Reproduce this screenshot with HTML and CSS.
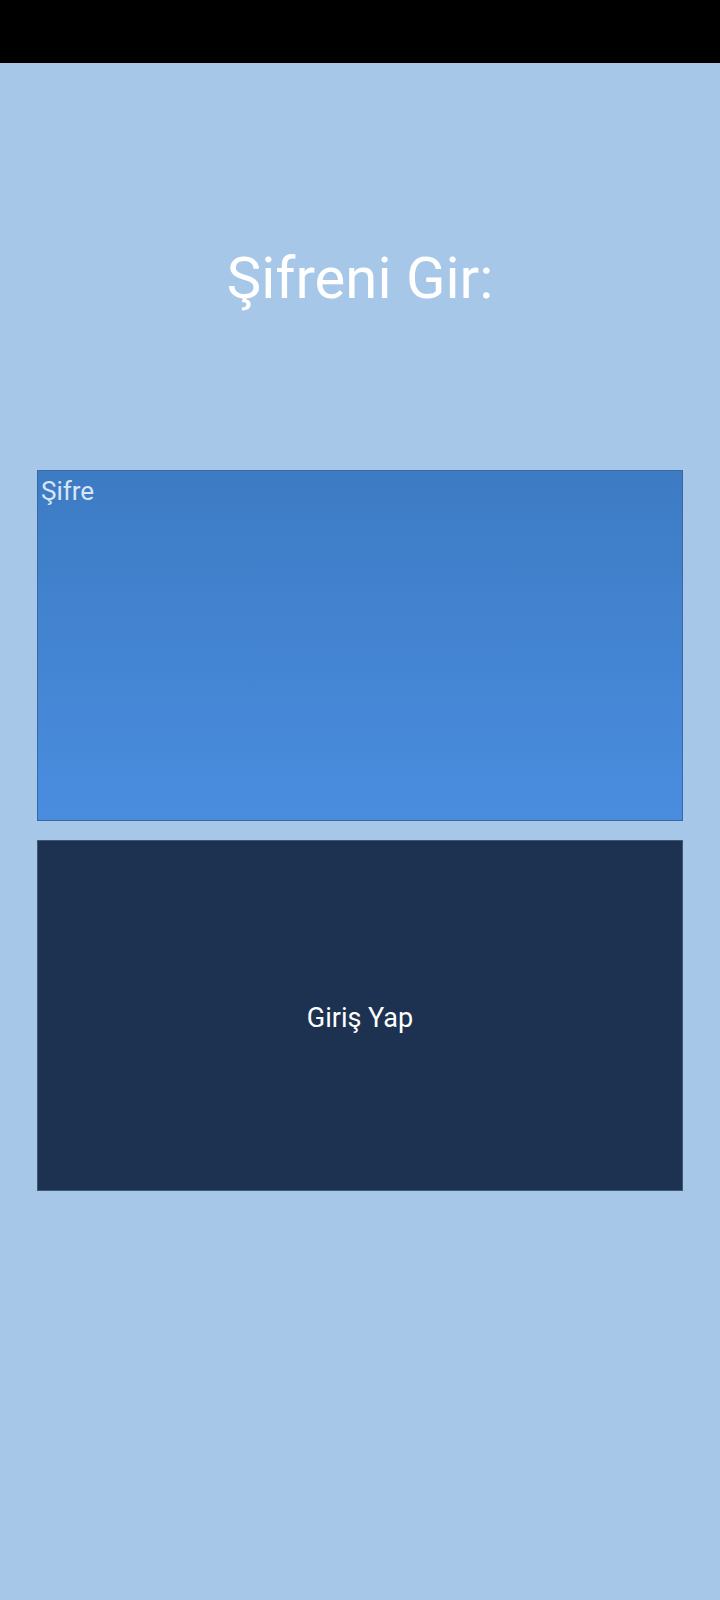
FILE: index.html
```html
<!DOCTYPE html>
<html lang="tr">
<head>
<meta charset="utf-8">
<title>Şifreni Gir</title>
<link rel="stylesheet" href="styles.css">
</head>
<body>
<div class="statusbar"></div>
<main class="screen">
  <h1 class="title">Şifreni Gir:</h1>
  <div class="field">
    <span class="placeholder">Şifre</span>
  </div>
  <button class="login" type="button">Giriş Yap</button>
</main>
</body>
</html>
```
FILE: styles.css
```css
html, body {
  margin: 0;
  padding: 0;
}
body {
  width: 720px;
  height: 1600px;
  background: #a7c7e9;
  font-family: Roboto, "Noto Sans", "Liberation Sans", sans-serif;
  overflow: hidden;
}
.statusbar {
  height: 63px;
  background: #000;
}
.screen {
  display: flex;
  flex-direction: column;
  padding: 0 37px 0 37px;
}
.title {
  margin: 181px 0 0;
  font-size: 58px;
  font-weight: 400;
  line-height: 68px;
  color: #fff;
  text-align: center;
}
.field {
  margin-top: 158px;
  height: 344px;
  border: 1px solid #3a68a3;
  background: linear-gradient(to bottom, #3d7bc4, #4a8ddf);
  padding: 5px 4px 0 3px;
}
.placeholder {
  display: block;
  font-size: 26px;
  line-height: 30px;
  color: #d9e6f6;
}
.login {
  margin: 19px 0 0;
  height: 351px;
  border: 1px solid #3b5879;
  background: #1c3250;
  color: #fff;
  font-family: Roboto, "Noto Sans", "Liberation Sans", sans-serif;
  font-size: 27px;
  padding: 4px 0 0;
  cursor: pointer;
}
```
